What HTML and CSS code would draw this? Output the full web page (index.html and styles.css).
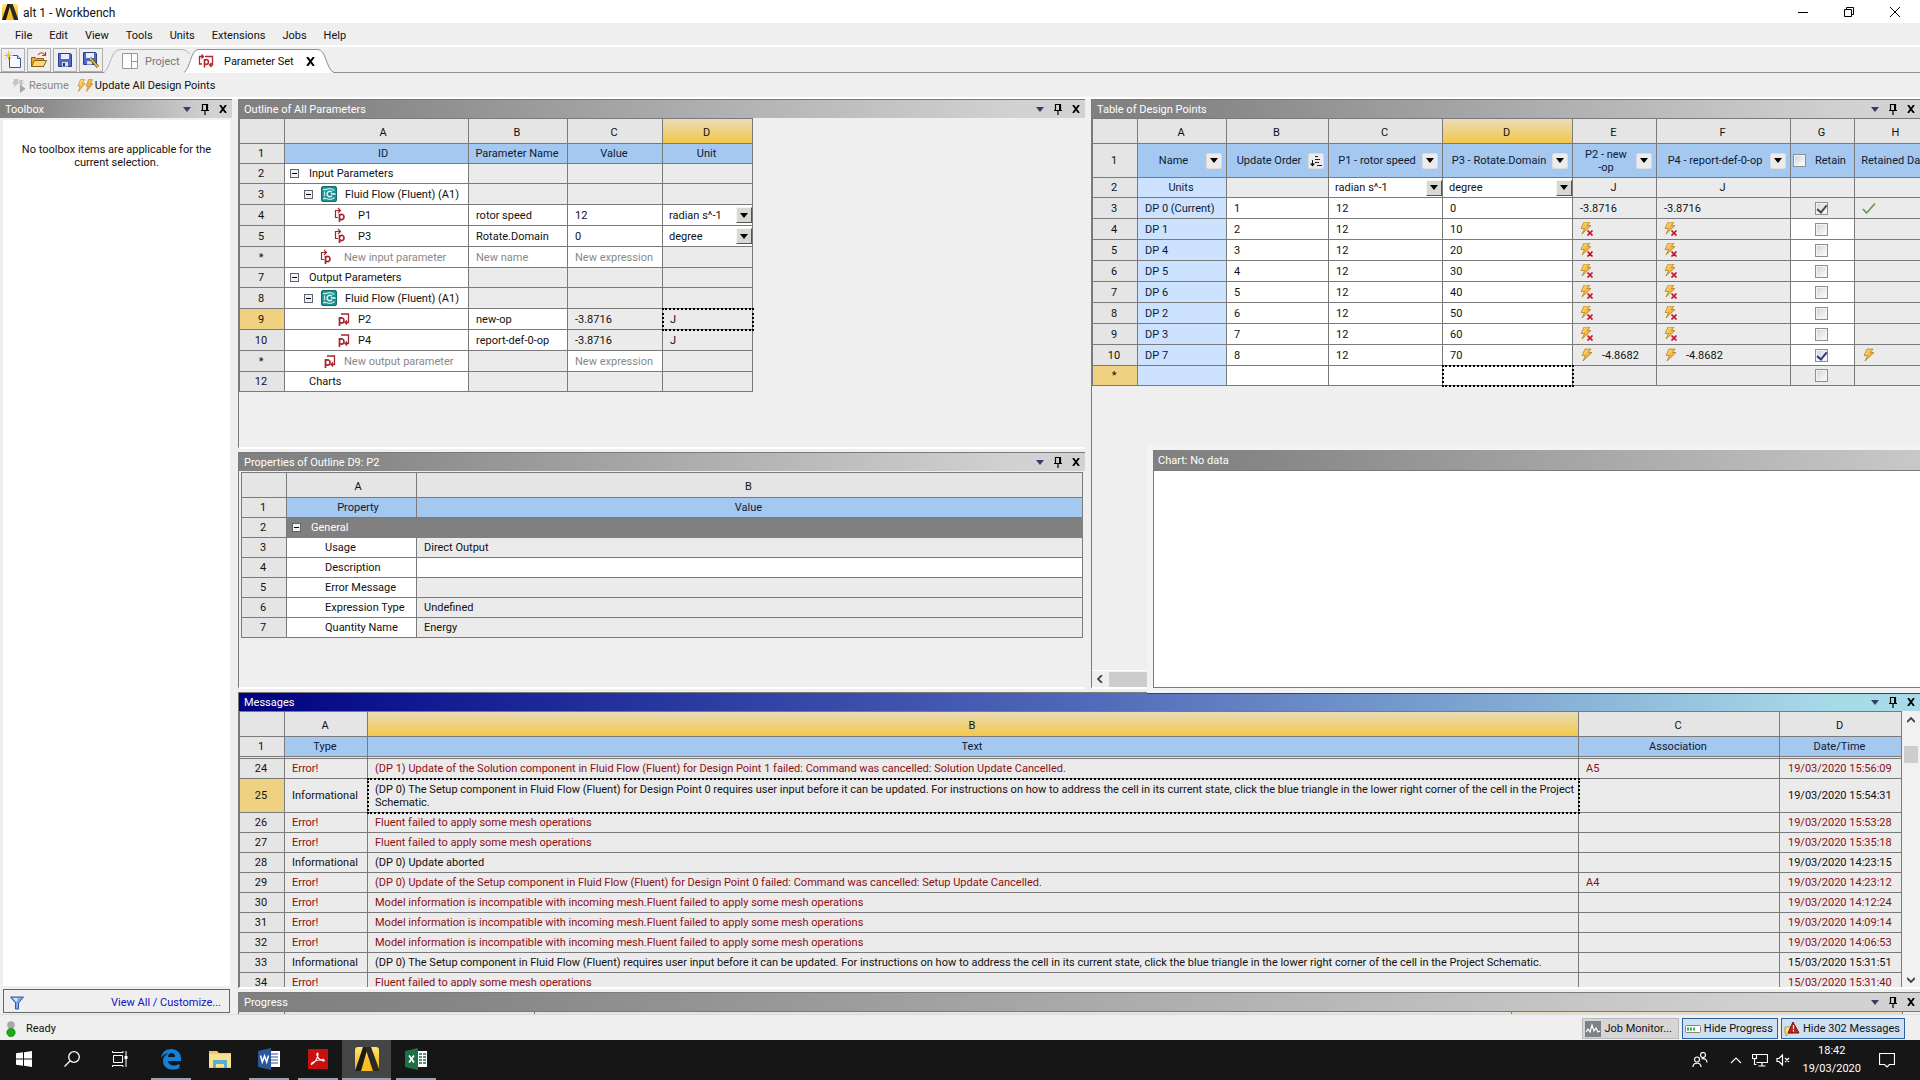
FILE: index.html
```html
<!DOCTYPE html>
<html lang="en">
<head>
<meta charset="utf-8">
<title>alt 1 - Workbench</title>
<link rel="stylesheet" href="styles.css">
</head>
<body>
<svg class="defs" aria-hidden="true">
  <defs>
    <linearGradient id="gold" x1="0" y1="0" x2="0" y2="1"><stop offset="0" stop-color="#ffe773"/><stop offset="1" stop-color="#f5a80c"/></linearGradient>
    <linearGradient id="boltfill" x1="0" y1="0" x2="1" y2="1"><stop offset="0" stop-color="#ffe680"/><stop offset="1" stop-color="#e08a10"/></linearGradient>
  </defs>
  <symbol id="ansys" viewBox="0 0 24 24"><rect width="24" height="24" rx="3" fill="url(#gold)"/><path d="M8 0h5L6 24H0z" fill="#1b1a17"/><path d="M10 0h6l8 22v2h-6z" fill="#2b2924"/><path d="M11.500 9l-5 15h10z" fill="#f9bf22"/></symbol>
  <symbol id="drop" viewBox="0 0 8 5"><path d="M0 0h8L4 5z" fill="currentColor"/></symbol>
  <symbol id="pin" viewBox="0 0 10 12"><path d="M2.500 7V1.500h5V7M1 7.500h8M5 8v4" fill="none" stroke="#000" stroke-width="1.200"/><path d="M6 1h2v6H6z"/></symbol>
  <symbol id="close" viewBox="0 0 8 8"><path d="M1 0l6 8M7 0L1 8" stroke="#000" stroke-width="1.800"/></symbol>
  <symbol id="minus" viewBox="0 0 9 9"><rect x=".5" y=".5" width="8" height="8" fill="#f2f2f2" stroke="#5c6570"/><path d="M2 4.500h5" stroke="#000"/></symbol>
  <symbol id="bolt" viewBox="0 0 14 14"><path d="M5 1h6L8.500 4.500H12L3 13l2.500-5.500H2z" fill="url(#boltfill)" stroke="#b5750f" stroke-width=".7"/></symbol>
  <symbol id="boltx" viewBox="0 0 14 14"><path d="M4 0h6L7.500 3.500H11L2 12l2.500-5.500H1z" fill="url(#boltfill)" stroke="#b5750f" stroke-width=".7"/><path d="M7.500 8.500l5 5M12.500 8.500l-5 5" stroke="#c8102a" stroke-width="1.700"/></symbol>
  <symbol id="pin-param" viewBox="0 0 18 16"><path d="M6 10.500H3.500V3.500H8M6 1l2.500 2.500L6 6" fill="none" stroke="#a8242c" stroke-width="1.200"/><path d="M7.500 15V7M7.500 8.500c2-2 4.500-1 4.500 1.500s-2.500 3.500-4.500 1.500" fill="none" stroke="#a8242c" stroke-width="1.700"/></symbol>
  <symbol id="pout-param" viewBox="0 0 18 16"><path d="M7.500 15V6M7.500 8c2-2 4.500-1 4.500 1.500s-2.500 3.500-4.500 1.500" fill="none" stroke="#a8242c" stroke-width="1.700"/><path d="M9 3h7.500v8.500H13M15 9.500l-2 2 2 2" fill="none" stroke="#a8242c" stroke-width="1.300"/></symbol>
  <symbol id="fluent" viewBox="0 0 16 16"><rect x=".5" y=".5" width="15" height="15" rx="1.500" fill="#1a9090" stroke="#0d6f70"/><path d="M2 3.500h3.500C8 2 11 2.500 13.500 4.500M2 12.500h3.500C8 14 11 13.500 13.500 11.500M3.500 5.500v5" fill="none" stroke="#bfe9e6" stroke-width="1.300"/><path d="M11 6.200C9 4.500 6 5.500 6 8s3 3.500 5 1.800M10 8h4.500" fill="none" stroke="#e6fbf9" stroke-width="1.500"/></symbol>
</svg>

<header class="titlebar">
  <svg class="app-icon"><use href="#ansys"/></svg>
  <h1>alt 1 - Workbench</h1>
  <div class="window-buttons">
    <button aria-label="Minimize"><svg viewBox="0 0 10 10"><path d="M0 5.500h10" stroke="#000"/></svg></button>
    <button aria-label="Restore"><svg viewBox="0 0 10 10"><path d="M.5 2.500h7v7h-7zM2.500 2.500v-2h7v7h-2" fill="none" stroke="#000"/></svg></button>
    <button aria-label="Close"><svg viewBox="0 0 10 10"><path d="M0 0l10 10M10 0L0 10" stroke="#000"/></svg></button>
  </div>
</header>

<nav class="menubar">
  <button>File</button><button>Edit</button><button>View</button><button>Tools</button><button>Units</button><button>Extensions</button><button>Jobs</button><button>Help</button>
</nav>

<div class="tabbar">
  <div class="file-tools">
    <button aria-label="New"><svg viewBox="0 0 18 18"><path d="M5.500 4.500h8l3 3v9h-11z" fill="#f4f8ff" stroke="#3b5a96"/><path d="M13.500 4.500v3h3" fill="#cfdcf5" stroke="#3b5a96"/><path d="M4.500 0v9M0 4.500h9M1.500 1.500l6 6M7.500 1.500l-6 6" stroke="#e8bd2e"/></svg></button>
    <button aria-label="Open"><svg viewBox="0 0 18 18"><path d="M1.500 15.500v-9h4l1 1h7v8z" fill="#e8a92f" stroke="#8d6114"/><path d="M1.500 15.500l3-6h12l-3 6z" fill="#ffd873" stroke="#8d6114"/><path d="M8 4c2-3 5-3 7 0M15.500 1v3.500H12" fill="none" stroke="#c33b2b" stroke-width="1.200"/></svg></button>
    <button aria-label="Save"><svg viewBox="0 0 18 18"><path d="M2.500 2.500h12l1 1v12h-13z" fill="#4f69c4" stroke="#2c3f8c"/><path d="M5 3h8v5H5z" fill="#e7eefb"/><path d="M6 11h6v4.500H6z" fill="#d5dcea"/><path d="M7 12h2v3H7z" fill="#22347c"/></svg></button>
    <button aria-label="Save As"><svg viewBox="0 0 18 18"><path d="M1.500 1.500h12l1 1v11h-13z" fill="#4f69c4" stroke="#2c3f8c"/><path d="M4 2h8v5H4z" fill="#e7eefb"/><path d="M5 10h5v3.500H5z" fill="#d5dcea"/><path d="M8 7l8 9" stroke="#6b4b12" stroke-width="3"/><path d="M8 7l8 9" stroke="#f0c64a" stroke-width="1.500"/></svg></button>
  </div>
  <div class="tabs" role="tablist">
    <button class="tab project" role="tab">
      <svg class="shape" viewBox="0 0 86 24" preserveAspectRatio="none"><path d="M0 23.500C6 20 7 .5 16 .5H78L86 6V24H0z" fill="#efefef"/><path d="M0 23.500C6 20 7 .5 16 .5H78Q83 1 86 5" fill="none" stroke="#b5b5b5"/></svg>
      <span class="tab-body"><svg class="tab-icon" viewBox="0 0 16 16"><path d="M.5.500h15v15H.5zM9.500.5v15M9.500 8.500h6" fill="#fdfdfd" stroke="#9a9a92"/></svg>Project</span>
    </button>
    <button class="tab active" role="tab" aria-selected="true">
      <svg class="shape" viewBox="0 0 150 24" preserveAspectRatio="none"><path d="M0 24C6 20 7 .5 14 .5H134C142 .5 142 20 150 24z" fill="#fff"/><path d="M0 23.500C6 20 7 .5 14 .5H134C142 .5 142 20 150 23.500" fill="none" stroke="#8f8f8f"/></svg>
      <span class="tab-body"><svg class="tab-icon" viewBox="0 0 16 16"><path d="M4 11H1.500V3.500H5M3.500 1.500l2 2-2 2M7 3.500h7.500V12H12M13.500 10l-2 2 2 2" fill="none" stroke="#b3262e" stroke-width="1.300"/><path d="M6.500 14.500V6M6.500 7.500c1.500-1.500 4-1 4 1.500s-2.500 3-4 1.500" fill="none" stroke="#b3262e" stroke-width="1.600"/></svg>Parameter Set<svg class="tab-close"><use href="#close"/></svg></span>
    </button>
  </div>
</div>

<div class="actionbar">
  <button class="disabled" disabled><svg class="wide" viewBox="0 0 16 16"><path d="M3 1h5L6 4h3L2 11l2-4H1zM8 2h5l-2 3h3L9 9" fill="#c4c4c4"/><path d="M9 7l6 4.500L9 16z" fill="#a5a5a5"/></svg>Resume</button>
  <button><svg class="wide" viewBox="0 0 16 14"><path d="M3.500 1h4L5.500 5H8L1.500 13 3 7.500H1zM11.500 1h4l-2 4H16l-6.500 8L11 7.500H9z" fill="url(#boltfill)" stroke="#b5750f" stroke-width=".5"/></svg>Update All Design Points</button>
</div>

<main class="workspace">
  <aside class="panel toolbox">
    <div class="panel-title"><h2>Toolbox</h2><div class="panel-buttons"><button aria-label="Menu"><svg class="i-drop"><use href="#drop"/></svg></button><button aria-label="Pin"><svg class="i-pin"><use href="#pin"/></svg></button><button aria-label="Close"><svg class="i-close"><use href="#close"/></svg></button></div></div>
    <div class="toolbox-body"><p>No toolbox items are applicable for the current selection.</p></div>
    <div class="toolbox-foot">
      <svg viewBox="0 0 14 14"><path d="M.5 1h13L8.500 7v6h-3V7z" fill="#7ea8e8" stroke="#2c5aa8"/><path d="M3 2h5L6.500 6z" fill="#d7e6ff"/></svg>
      <a href="#">View All / Customize...</a>
    </div>
  </aside>

  <div class="docks">
    <div class="upper">
      <div class="left-stack">
        <section class="panel">
          <div class="panel-title"><h2>Outline of All Parameters</h2><div class="panel-buttons"><button aria-label="Menu"><svg class="i-drop"><use href="#drop"/></svg></button><button aria-label="Pin"><svg class="i-pin"><use href="#pin"/></svg></button><button aria-label="Close"><svg class="i-close"><use href="#close"/></svg></button></div></div>
          <table class="sheet outline">
            <colgroup><col class="c-row"><col class="o-id"><col class="o-name"><col class="o-value"><col class="o-unit"></colgroup>
            <tr class="letters"><th></th><th>A</th><th>B</th><th>C</th><th class="picked">D</th></tr>
            <tr class="heads"><th>1</th><th>ID</th><th>Parameter Name</th><th>Value</th><th>Unit</th></tr>
            <tr class="short"><th>2</th><td><div class="tree l1"><svg class="i-minus"><use href="#minus"/></svg>Input Parameters</div></td><td class="ro"></td><td class="ro"></td><td class="ro"></td></tr>
            <tr><th>3</th><td><div class="tree l2"><svg class="i-minus"><use href="#minus"/></svg><svg class="i-sys"><use href="#fluent"/></svg>Fluid Flow (Fluent) (A1)</div></td><td class="ro"></td><td class="ro"></td><td class="ro"></td></tr>
            <tr><th>4</th><td><div class="tree l4"><svg class="i-param"><use href="#pin-param"/></svg>P1</div></td><td>rotor speed</td><td>12</td><td class="has-combo"><span class="combo"><select aria-label="Unit of P1"><option>radian s^-1</option></select><span class="arrow"><svg class="i-drop"><use href="#drop"/></svg></span></span></td></tr>
            <tr><th>5</th><td><div class="tree l4"><svg class="i-param"><use href="#pin-param"/></svg>P3</div></td><td>Rotate.Domain</td><td>0</td><td class="has-combo"><span class="combo"><select aria-label="Unit of P3"><option>degree</option></select><span class="arrow"><svg class="i-drop"><use href="#drop"/></svg></span></span></td></tr>
            <tr class="new"><th>*</th><td><div class="tree l3"><svg class="i-param"><use href="#pin-param"/></svg>New input parameter</div></td><td>New name</td><td>New expression</td><td class="ro"></td></tr>
            <tr class="short"><th>7</th><td><div class="tree l1"><svg class="i-minus"><use href="#minus"/></svg>Output Parameters</div></td><td class="ro"></td><td class="ro"></td><td class="ro"></td></tr>
            <tr><th>8</th><td><div class="tree l2"><svg class="i-minus"><use href="#minus"/></svg><svg class="i-sys"><use href="#fluent"/></svg>Fluid Flow (Fluent) (A1)</div></td><td class="ro"></td><td class="ro"></td><td class="ro"></td></tr>
            <tr><th class="picked-row">9</th><td><div class="tree l4"><svg class="i-param"><use href="#pout-param"/></svg>P2</div></td><td>new-op</td><td class="ro">-3.8716</td><td class="ro cursor">J</td></tr>
            <tr><th>10</th><td><div class="tree l4"><svg class="i-param"><use href="#pout-param"/></svg>P4</div></td><td>report-def-0-op</td><td class="ro">-3.8716</td><td class="ro">J</td></tr>
            <tr class="new"><th>*</th><td><div class="tree l3"><svg class="i-param"><use href="#pout-param"/></svg>New output parameter</div></td><td class="ro"></td><td>New expression</td><td class="ro"></td></tr>
            <tr class="short"><th>12</th><td><div class="tree l1 leaf">Charts</div></td><td class="ro"></td><td class="ro"></td><td class="ro"></td></tr>
          </table>
        </section>

        <section class="panel">
          <div class="panel-title"><h2>Properties of Outline D9: P2</h2><div class="panel-buttons"><button aria-label="Menu"><svg class="i-drop"><use href="#drop"/></svg></button><button aria-label="Pin"><svg class="i-pin"><use href="#pin"/></svg></button><button aria-label="Close"><svg class="i-close"><use href="#close"/></svg></button></div></div>
          <div class="props-wrap">
          <table class="sheet props">
            <colgroup><col class="c-row"><col class="p-name"><col></colgroup>
            <tr class="letters"><th></th><th>A</th><th>B</th></tr>
            <tr class="heads"><th>1</th><th>Property</th><th>Value</th></tr>
            <tr class="group short"><th>2</th><td colspan="2"><div class="tree l1"><svg class="i-minus"><use href="#minus"/></svg>General</div></td></tr>
            <tr class="short"><th>3</th><td>Usage</td><td class="ro">Direct Output</td></tr>
            <tr class="short"><th>4</th><td>Description</td><td></td></tr>
            <tr class="short"><th>5</th><td>Error Message</td><td class="ro"></td></tr>
            <tr class="short"><th>6</th><td>Expression Type</td><td class="ro">Undefined</td></tr>
            <tr class="short"><th>7</th><td>Quantity Name</td><td class="ro">Energy</td></tr>
          </table>
          </div>
        </section>
      </div>

      <div class="design-area">
        <section class="panel">
          <div class="panel-title"><h2>Table of Design Points</h2><div class="panel-buttons"><button aria-label="Menu"><svg class="i-drop"><use href="#drop"/></svg></button><button aria-label="Pin"><svg class="i-pin"><use href="#pin"/></svg></button><button aria-label="Close"><svg class="i-close"><use href="#close"/></svg></button></div></div>
          <div class="grid-view">
          <table class="sheet design">
            <colgroup><col class="c-row"><col class="d-a"><col class="d-b"><col class="d-c"><col class="d-d"><col class="d-e"><col class="d-f"><col class="d-g"><col class="d-h"></colgroup>
            <tr class="letters"><th></th><th>A</th><th>B</th><th>C</th><th class="picked">D</th><th>E</th><th>F</th><th>G</th><th>H</th></tr>
            <tr class="heads tall"><th>1</th>
              <th><div class="head"><span>Name</span><button class="filter" aria-label="Filter Name"><svg class="i-drop"><use href="#drop"/></svg></button></div></th>
              <th><div class="head"><span>Update Order</span><button class="filter" aria-label="Sort Update Order"><svg class="i-sort" viewBox="0 0 12 12"><path d="M5 1.500h3M5 4.500h5M5 7.500h4M7 10.500h5M2.500 5v5" stroke="#222"/><path d="M0 8.500h5l-2.500 3z"/></svg></button></div></th>
              <th><div class="head"><span>P1 - rotor speed</span><button class="filter" aria-label="Filter P1"><svg class="i-drop"><use href="#drop"/></svg></button></div></th>
              <th><div class="head"><span>P3 - Rotate.Domain</span><button class="filter" aria-label="Filter P3"><svg class="i-drop"><use href="#drop"/></svg></button></div></th>
              <th><div class="head"><span>P2 - new<br>-op</span><button class="filter" aria-label="Filter P2"><svg class="i-drop"><use href="#drop"/></svg></button></div></th>
              <th><div class="head"><span>P4 - report-def-0-op</span><button class="filter" aria-label="Filter P4"><svg class="i-drop"><use href="#drop"/></svg></button></div></th>
              <th><label class="retain"><input type="checkbox">Retain</label></th>
              <th class="nowrap">Retained Data</th></tr>
            <tr class="short units"><th>2</th><td class="name">Units</td><td class="ro"></td><td class="has-combo"><span class="combo"><select aria-label="Unit of P1"><option>radian s^-1</option></select><span class="arrow"><svg class="i-drop"><use href="#drop"/></svg></span></span></td><td class="has-combo"><span class="combo"><select aria-label="Unit of P3"><option>degree</option></select><span class="arrow"><svg class="i-drop"><use href="#drop"/></svg></span></span></td><td class="ro">J</td><td class="ro">J</td><td class="ro"></td><td class="ro"></td></tr>
            <tr><th>3</th><td class="name">DP 0 (Current)</td><td>1</td><td>12</td><td>0</td><td class="ro">-3.8716</td><td class="ro">-3.8716</td><td class="ro tick"><input type="checkbox" class="grey" aria-label="Retain DP 0" checked></td><td class="ro"><svg class="i-bolt" viewBox="0 0 14 14"><path d="M1 8l3.500 4L13 2.500" fill="none" stroke="#6f9a4a" stroke-width="1.800"/></svg></td></tr>
            <tr><th>4</th><td class="name">DP 1</td><td>2</td><td>12</td><td>10</td><td class="ro"><svg class="i-bolt"><use href="#boltx"/></svg></td><td class="ro"><svg class="i-bolt"><use href="#boltx"/></svg></td><td class="tick"><input type="checkbox" aria-label="Retain DP 1"></td><td class="ro"></td></tr>
            <tr><th>5</th><td class="name">DP 4</td><td>3</td><td>12</td><td>20</td><td class="ro"><svg class="i-bolt"><use href="#boltx"/></svg></td><td class="ro"><svg class="i-bolt"><use href="#boltx"/></svg></td><td class="tick"><input type="checkbox" aria-label="Retain DP 4"></td><td class="ro"></td></tr>
            <tr><th>6</th><td class="name">DP 5</td><td>4</td><td>12</td><td>30</td><td class="ro"><svg class="i-bolt"><use href="#boltx"/></svg></td><td class="ro"><svg class="i-bolt"><use href="#boltx"/></svg></td><td class="tick"><input type="checkbox" aria-label="Retain DP 5"></td><td class="ro"></td></tr>
            <tr><th>7</th><td class="name">DP 6</td><td>5</td><td>12</td><td>40</td><td class="ro"><svg class="i-bolt"><use href="#boltx"/></svg></td><td class="ro"><svg class="i-bolt"><use href="#boltx"/></svg></td><td class="tick"><input type="checkbox" aria-label="Retain DP 6"></td><td class="ro"></td></tr>
            <tr><th>8</th><td class="name">DP 2</td><td>6</td><td>12</td><td>50</td><td class="ro"><svg class="i-bolt"><use href="#boltx"/></svg></td><td class="ro"><svg class="i-bolt"><use href="#boltx"/></svg></td><td class="tick"><input type="checkbox" aria-label="Retain DP 2"></td><td class="ro"></td></tr>
            <tr><th>9</th><td class="name">DP 3</td><td>7</td><td>12</td><td>60</td><td class="ro"><svg class="i-bolt"><use href="#boltx"/></svg></td><td class="ro"><svg class="i-bolt"><use href="#boltx"/></svg></td><td class="tick"><input type="checkbox" aria-label="Retain DP 3"></td><td class="ro"></td></tr>
            <tr><th>10</th><td class="name">DP 7</td><td>8</td><td>12</td><td>70</td><td class="ro"><svg class="i-bolt"><use href="#bolt"/></svg><span class="val">-4.8682</span></td><td class="ro"><svg class="i-bolt"><use href="#bolt"/></svg><span class="val">-4.8682</span></td><td class="tick"><input type="checkbox" aria-label="Retain DP 7" checked></td><td class="ro"><svg class="i-bolt"><use href="#bolt"/></svg></td></tr>
            <tr class="short"><th class="picked-row">*</th><td class="name"></td><td></td><td></td><td class="cursor"></td><td class="ro"></td><td class="ro"></td><td class="ro tick"><input type="checkbox" aria-label="Retain new design point"></td><td class="ro"></td></tr>
          </table>
          </div>
          <div class="hscroll"><svg viewBox="0 0 6 8"><path d="M5 0L1 4l4 4" fill="none" stroke="#444" stroke-width="1.800"/></svg><span class="thumb"></span></div>
        </section>
        <section class="chart-window"><h2>Chart: No data</h2><div class="canvas"></div></section>
      </div>
    </div>

    <section class="panel messages">
      <div class="panel-title focused"><h2>Messages</h2><div class="panel-buttons"><button aria-label="Menu"><svg class="i-drop"><use href="#drop"/></svg></button><button aria-label="Pin"><svg class="i-pin"><use href="#pin"/></svg></button><button aria-label="Close"><svg class="i-close"><use href="#close"/></svg></button></div></div>
      <div class="log">
        <div class="log-view">
        <table class="sheet">
          <colgroup><col class="c-row"><col class="m-type"><col><col class="m-assoc"><col class="m-date"></colgroup>
          <tr class="letters"><th></th><th>A</th><th class="picked">B</th><th>C</th><th>D</th></tr>
          <tr class="heads"><th>1</th><th>Type</th><th>Text</th><th>Association</th><th>Date/Time</th></tr>
          <tr class="split"><th></th><td></td><td></td><td></td><td></td></tr>
          <tr class="error"><th>24</th><td>Error!</td><td>(DP 1) Update of the Solution component in Fluid Flow (Fluent) for Design Point 1 failed: Command was cancelled: Solution Update Cancelled.</td><td>A5</td><td>19/03/2020 15:56:09</td></tr>
          <tr class="tall"><th class="picked-row">25</th><td>Informational</td><td class="cursor">(DP 0) The Setup component in Fluid Flow (Fluent) for Design Point 0 requires user input before it can be updated. For instructions on how to address the cell in its current state, click the blue triangle in the lower right corner of the cell in the Project<br>Schematic.</td><td></td><td>19/03/2020 15:54:31</td></tr>
          <tr class="error"><th>26</th><td>Error!</td><td>Fluent failed to apply some mesh operations</td><td></td><td>19/03/2020 15:53:28</td></tr>
          <tr class="error"><th>27</th><td>Error!</td><td>Fluent failed to apply some mesh operations</td><td></td><td>19/03/2020 15:35:18</td></tr>
          <tr><th>28</th><td>Informational</td><td>(DP 0) Update aborted</td><td></td><td>19/03/2020 14:23:15</td></tr>
          <tr class="error"><th>29</th><td>Error!</td><td>(DP 0) Update of the Setup component in Fluid Flow (Fluent) for Design Point 0 failed: Command was cancelled: Setup Update Cancelled.</td><td>A4</td><td>19/03/2020 14:23:12</td></tr>
          <tr class="error"><th>30</th><td>Error!</td><td>Model information is incompatible with incoming mesh.Fluent failed to apply some mesh operations</td><td></td><td>19/03/2020 14:12:24</td></tr>
          <tr class="error"><th>31</th><td>Error!</td><td>Model information is incompatible with incoming mesh.Fluent failed to apply some mesh operations</td><td></td><td>19/03/2020 14:09:14</td></tr>
          <tr class="error"><th>32</th><td>Error!</td><td>Model information is incompatible with incoming mesh.Fluent failed to apply some mesh operations</td><td></td><td>19/03/2020 14:06:53</td></tr>
          <tr><th>33</th><td>Informational</td><td>(DP 0) The Setup component in Fluid Flow (Fluent) requires user input before it can be updated. For instructions on how to address the cell in its current state, click the blue triangle in the lower right corner of the cell in the Project Schematic.</td><td></td><td>15/03/2020 15:31:51</td></tr>
          <tr class="error"><th>34</th><td>Error!</td><td>Fluent failed to apply some mesh operations</td><td></td><td>15/03/2020 15:31:40</td></tr>
        </table>
        </div>
        <div class="vscroll"><svg viewBox="0 0 8 6"><path d="M0 5l4-4 4 4" fill="none" stroke="#444" stroke-width="1.800"/></svg><span class="thumb"></span><svg class="down" viewBox="0 0 8 6"><path d="M0 1l4 4 4-4" fill="none" stroke="#444" stroke-width="1.800"/></svg></div>
      </div>
    </section>

    <section class="panel progress">
      <div class="panel-title"><h2>Progress</h2><div class="panel-buttons"><button aria-label="Menu"><svg class="i-drop"><use href="#drop"/></svg></button><button aria-label="Pin"><svg class="i-pin"><use href="#pin"/></svg></button><button aria-label="Close"><svg class="i-close"><use href="#close"/></svg></button></div></div>
      <div class="progress-cols"><span></span><span></span><span></span><span class="gold"></span><span class="end"></span></div>
    </section>
  </div>
</main>

<footer class="statusbar">
  <svg class="lamp" viewBox="0 0 10 16"><circle cx="5" cy="4" r="3.800" fill="#a9a9a9"/><circle cx="5" cy="11.500" r="4.200" fill="#17ab17" stroke="#0b7a0b" stroke-width=".6"/></svg>
  <span class="ready">Ready</span>
  <div class="status-buttons">
    <button class="plain"><svg viewBox="0 0 16 16"><rect width="16" height="16" fill="#7c8288"/><path d="M1 11l2-3 2 3 2-7 2 6 2-3 2 4 2-1" fill="none" stroke="#fff" stroke-width="1.200"/></svg>Job Monitor...</button>
    <button><svg viewBox="0 0 16 16"><rect x=".5" y="4.500" width="15" height="7" rx="1" fill="#fff" stroke="#7d8a7d"/><path d="M2 6.500h2v3H2zM5 6.500h2v3H5zM8 6.500h2v3H8z" fill="#38b838"/></svg>Hide Progress</button>
    <button><svg viewBox="0 0 16 16"><path d="M1 6h8v6H5l-3 3v-3H1z" fill="#ffe08a" stroke="#c9912a"/><path d="M9 1l6 11H4z" fill="#b9261d" stroke="#7c130d"/><path d="M9.500 4v4M9.500 9v1.500" stroke="#fff" stroke-width="1.200"/></svg>Hide 302 Messages</button>
  </div>
</footer>

<footer class="taskbar">
  <div class="apps">
    <button class="system" aria-label="Start"><svg class="t16" viewBox="0 0 16 16"><path d="M0 2.300L7 1.300V7.500H0zM8 1.200L16 0v7.500H8zM0 8.500h7v6.200l-7-1zM8 8.500h8V16l-8-1.200z" fill="#fff"/></svg></button>
    <button class="system" aria-label="Search"><svg class="t16" viewBox="0 0 16 16"><circle cx="10" cy="6" r="5.300" fill="none" stroke="#fff" stroke-width="1.300"/><path d="M6 10L.5 15.500" stroke="#fff" stroke-width="1.300"/></svg></button>
    <button class="system" aria-label="Task View"><svg class="t16" viewBox="0 0 16 16"><path d="M1.500 4.500h9v7h-9zM.5 0v1.500h10.500V0M.5 16v-1.500h10.500V16M14 0v16" fill="none" stroke="#fff"/><path d="M12.500 5h3v3h-3z" fill="#fff"/></svg></button>
    <button class="open edge" aria-label="Edge"><svg class="t22" viewBox="0 0 22 22"><path d="M1 10C2 4 6 1 11 1c6 0 10 4 10 9v3H8c.2 3 3 4.500 6 4.500 2 0 4-.6 5.500-1.500v4c-2 1.200-4 1.600-6.500 1.600C7 21.600 3 18 3 13c0-4 2.500-6.500 6-7.500C5 5.500 2.500 7.500 1 10zm7-1h7c0-2.500-1.200-4-3.500-4S8.300 6.700 8 9z" fill="#1480d8"/></svg></button>
    <button aria-label="File Explorer"><svg class="t22" viewBox="0 0 22 20"><path d="M0 2h8l2 2h12v15H0z" fill="#f0c75e"/><path d="M0 5h22v13H0z" fill="#fbe08f"/><path d="M4 19v-7q0-1 1-1h12q1 0 1 1v7h-3v-4H7v4z" fill="#4fb3d3"/></svg></button>
    <button class="open" aria-label="Word"><svg class="t22" viewBox="0 0 22 22"><path d="M11 3h11v16H11z" fill="#fff"/><path d="M13 6h7M13 9h7M13 12h7M13 15h7" stroke="#2b579a"/><path d="M0 3l13-3v22L0 19z" fill="#2b579a"/><path d="M2.500 7.500L4.300 14l2.200-6 2.200 6 1.800-6.500" fill="none" stroke="#fff" stroke-width="1.500"/></svg></button>
    <button class="open" aria-label="Acrobat Reader"><svg class="t22" viewBox="0 0 22 22"><path d="M1 1h20v20H1z" fill="#c8110e"/><path d="M5 16c2-1 6-5 6-10 0-1.500-1.500-1-1 1 .7 3 3.500 6 6.500 6 1.500-.2.500-1.800-1.500-1.500-3 .3-6 1-8.500 2.500S4 17 5 16z" fill="none" stroke="#fff" stroke-width="1.200"/></svg></button>
    <button class="current" aria-label="Workbench"><svg class="t24"><use href="#ansys"/></svg></button>
    <button class="open" aria-label="Excel"><svg class="t22" viewBox="0 0 22 22"><path d="M11 3h11v16H11z" fill="#fff"/><path d="M14 6h3M18 6h3M14 9h3M18 9h3M14 12h3M18 12h3M14 15h3M18 15h3" stroke="#1d7044" stroke-width="1.500"/><path d="M0 3l13-3v22L0 19z" fill="#1d7044"/><path d="M4 7.500l5 7M9 7.500l-5 7" stroke="#fff" stroke-width="1.700"/></svg></button>
  </div>
  <div class="tray">
    <svg class="people" viewBox="0 0 16 16"><circle cx="5" cy="7.500" r="2.500"/><path d="M1 15c0-5 8-5 8 0"/><circle cx="11" cy="3" r="2.500"/><path d="M9.500 7c3-1 5.500.5 5.500 3.500"/></svg>
    <svg class="chev" viewBox="0 0 12 12"><path d="M1 9l5-5 5 5"/></svg>
    <svg class="net" viewBox="0 0 16 14"><path d="M4.500 1.500h11v8h-11M.5 1.500h4v4h-4zM2.500 5.500v6h2M10 9.500v3M6.500 13h7"/></svg>
    <svg class="vol" viewBox="0 0 14 12"><path d="M1 4.500h2l3.500-3.500v10L3 7.500H1zM9 4l4 4M13 4L9 8"/></svg>
    <time class="clock"><span>18:42</span><span>19/03/2020</span></time>
    <svg class="note" viewBox="0 0 16 16"><path d="M.5 1.500h15v11h-5L8 15l-2.500-2.500h-5z"/></svg>
  </div>
</footer>
</body>
</html>
```
FILE: styles.css
```css
:root {
  --line: #7a7a7a;
  --face: #efefef;
  --cell: #ebebeb;
  --head: #e5e5e5;
  --blue: #a5c8f0;
  --pale: #cce2ff;
  --gold: #efd281;
  --gold-fade: linear-gradient(#e9dcb8, #f3c84a);
}

* { box-sizing: border-box; }

body {
  margin: 0;
  height: 100vh;
  display: flex;
  flex-direction: column;
  overflow: hidden;
  background: var(--face);
  color: #111;
  font: 11px/13px Roboto, "Noto Sans", sans-serif;
}

h1, h2, p { margin: 0; font-size: 11px; font-weight: 400; }
button, select, input { margin: 0; padding: 0; border: 0; background: none; color: inherit; font: inherit; }
svg { display: block; flex: none; }
.defs { width: 0; height: 0; position: absolute; }

/* Icon sizes */
.i-drop { width: 8px; height: 5px; }
.i-pin { width: 10px; height: 12px; }
.i-close { width: 8px; height: 8px; }
.i-minus { width: 9px; height: 9px; }
.i-sys { width: 16px; height: 16px; }
.i-param { width: 18px; height: 16px; }
.i-sort { width: 12px; height: 12px; }
.i-bolt { width: 14px; height: 14px; display: inline-block; vertical-align: middle; }

/* Title bar */
.titlebar { display: flex; align-items: center; height: 23px; padding-left: 2px; background: #fff; }
.titlebar h1 { font-size: 12px; line-height: 16px; margin-left: 5px; padding-top: 2px; flex: 1; }
.app-icon { width: 16px; height: 16px; }
.window-buttons { display: flex; padding-right: 2px; }
.window-buttons button { width: 46px; height: 20px; display: grid; place-items: center; }
.window-buttons svg { width: 10px; height: 10px; }

/* Menus and toolbars */
.menubar { display: flex; gap: 17px; height: 24px; padding: 2px 0 0 15px; border-bottom: 2px solid #fff; }
.tabbar { display: flex; height: 26px; border-bottom: 1px solid #8f8f8f; }
.file-tools { display: flex; gap: 2px; padding: 1px 0 0 1px; }
.file-tools button { width: 24px; height: 24px; border: 1px solid #b0b0b0; display: grid; place-items: center; }
.file-tools svg { width: 18px; height: 18px; }
.tabs { display: flex; margin: 2px 0 -1px 1px; }
.tab { display: grid; height: 24px; }
.tab > * { grid-area: 1 / 1; }
.tab.project { width: 86px; color: #777; }
.tab.active { width: 150px; margin-left: -6px; }
.shape { width: 100%; height: 24px; }
.tab-body { display: flex; align-items: center; gap: 7px; padding-left: 18px; }
.active .tab-body { padding-left: 14px; gap: 10px; }
.tab-icon { width: 16px; height: 16px; }
.tab-close { width: 9px; height: 9px; margin-left: 2px; }
.actionbar { display: flex; gap: 8px; height: 26px; padding: 0 0 0 11px; border-bottom: 2px solid #fff; }
.actionbar button { display: flex; align-items: center; gap: 2px; }
.actionbar .disabled { color: #888; }
.wide { width: 16px; height: 15px; }

/* Docked panels */
.workspace { flex: 1; min-height: 0; display: grid; grid-template-columns: 232px minmax(0, 1fr); gap: 6px; }
.docks { min-height: 0; display: grid; grid-template-rows: minmax(0, 590fr) minmax(0, 297fr) 22px; gap: 3px; }
.upper { display: grid; grid-template-columns: minmax(0, 847fr) minmax(0, 829fr); gap: 6px; min-height: 0; }
.left-stack { display: grid; grid-template-rows: minmax(0, 350fr) minmax(0, 237fr); gap: 3px; min-height: 0; }
.panel { display: flex; flex-direction: column; min-height: 0; overflow: hidden; border: solid var(--line); border-width: 1px 0 0 1px; border-bottom: 2px solid #fff; }
.panel-title { display: flex; flex: none; align-items: center; height: 18px; padding: 0 0 0 5px; background: linear-gradient(90deg, #808080, #858585 12%, #d2d2d2 92%); color: #fff; }
.panel-title h2 { flex: 1; }
.panel-title.focused { background: linear-gradient(90deg, #00007c, #101890 10%, #5068b8 50%, #a8dbe8 95%); }
.panel-buttons { display: flex; color: #333d66; }
.panel-buttons button { width: 18px; height: 18px; display: grid; place-items: center; }

.toolbox { border-left: 0; border-bottom: 0; }
.toolbox-body { flex: 1; margin: 2px 2px 0 3px; padding: 23px 16px; background: #fff; text-align: center; }
.toolbox-foot { display: flex; align-items: center; justify-content: space-between; height: 24px; margin: 3px 2px 1px 3px; padding: 3px 8px 0 6px; border: 1px solid #666; }
.toolbox-foot svg { width: 14px; height: 14px; }
.toolbox-foot a { color: #1010c0; text-decoration: none; }

/* Spreadsheet tables */
.sheet { width: 100%; table-layout: fixed; border-spacing: 0; border-top: 1px solid var(--line); flex: none; }
.sheet th, .sheet td { height: 21px; padding: 0 0 0 7px; border: solid var(--line); border-width: 0 1px 1px 0; background: #fff; text-align: left; font-weight: 400; }
.sheet th { padding: 0 2px 0 0; background: var(--head); text-align: center; }
.sheet th:first-child { border-left-width: 1px; }
.sheet .letters th { height: 25px; padding-top: 2px; }
.sheet .heads th, .sheet .short th, .sheet .short td { height: 20px; }
.sheet .heads th:not(:first-child) { background: var(--blue); color: #0c1a33; }
.sheet .tall th, .sheet .tall td { height: 34px; }
.sheet .ro { background: var(--cell); }
.sheet .letters .picked { background: var(--gold-fade); }
.sheet .picked-row { background: var(--gold); }
.sheet .new td { color: #888; }
.sheet .cursor { outline: 2px dotted #000; outline-offset: -1px; }
.sheet .has-combo { padding: 0 0 0 6px; }
.sheet .nowrap { white-space: nowrap; }
.c-row { width: 46px; }

.combo { display: grid; grid-template-columns: 1fr 16px; align-items: center; }
.combo select { grid-area: 1 / 1 / 2 / 3; appearance: none; height: 16px; }
.combo .arrow { grid-area: 1 / 2; height: 16px; display: grid; place-items: center; background: #d8d8d4; border: 1px solid #f5f5f5; border-right-color: #555; border-bottom-color: #555; color: #000; pointer-events: none; }

.tree { display: flex; align-items: center; }
.sheet td:has(.tree) { padding: 0; }
.l1 { padding-left: 5px; gap: 10px; }
.l1.leaf { padding-left: 24px; }
.l2 { padding-left: 19px; gap: 8px; }
.l3 { padding-left: 33px; gap: 8px; }
.l4 { padding-left: 47px; gap: 8px; }

.outline { width: 514px; }
.outline th:nth-child(2), .props th:nth-child(2) { padding-left: 15px; }
.o-id { width: 184px; }
.o-name { width: 99px; }
.o-value { width: 95px; }
.o-unit { width: 90px; }

.props-wrap { padding: 1px 2px 0 2px; }
.p-name { width: 130px; }
.props td:nth-child(2) { padding-left: 38px; }
.props .group td:nth-child(2) { padding: 0; background: #808080; border-color: #808080; color: #fff; }

.grid-view { flex: 1; min-height: 0; overflow: hidden; }
.design { width: 847px; }
.d-a { width: 89px; }
.d-b { width: 102px; }
.d-c { width: 114px; }
.d-d { width: 130px; }
.d-e { width: 84px; }
.d-f { width: 134px; }
.d-g { width: 64px; }
.d-h { width: 84px; }
.design td { padding-left: 7px; }
.sheet .name { background: var(--pale); color: #0c1a33; }
.units td { text-align: center; padding: 0 2px 0 0; }
.units .has-combo { text-align: left; }
.sheet .heads th:has(.head) { padding: 0; }
.head { display: flex; align-items: center; padding: 0 4px 0 3px; }
.head span { flex: 1; white-space: nowrap; }
.filter { width: 16px; height: 16px; display: grid; place-items: center; background: #ececec; border: 1px solid #dcdcdc; border-radius: 2px; color: #000; }
.design .tick { padding: 0 2px 0 0; text-align: center; }
.val { margin-left: 8px; vertical-align: middle; }
.retain { display: flex; align-items: center; gap: 9px; padding-left: 2px; }
input[type="checkbox"] { appearance: none; width: 13px; height: 13px; border: 1px solid #8c9096; background: linear-gradient(135deg, #cfd2d6, #fff); box-shadow: inset 0 0 0 1px #f4f4f4; display: inline-grid; place-items: center; vertical-align: middle; }
input[type="checkbox"]:checked::after { content: ""; width: 4px; height: 8px; border: solid #2b3c7c; border-width: 0 2px 2px 0; transform: rotate(40deg); margin-bottom: 2px; }
input.grey:checked::after { border-color: #4a4a4a; }

.hscroll { display: flex; align-items: center; height: 17px; flex: none; border-top: 1px solid #fff; padding-left: 5px; gap: 6px; }
.hscroll svg { width: 6px; height: 8px; }
.hscroll .thumb { width: 300px; height: 15px; background: #cdcdcd; }

.design-area { position: relative; display: grid; min-height: 0; min-width: 0; }
.chart-window { position: absolute; left: 56px; right: 0; top: 346px; bottom: -5px; z-index: 1; display: flex; flex-direction: column; padding: 5px 0 5px 6px; background: #f3f3f3; border-bottom: 1px solid #444; }
.chart-window h2 { height: 21px; padding: 4px 5px; background: linear-gradient(90deg, #808080, #858585 12%, #c8c8c8); color: #fff; border-bottom: 1px solid var(--line); }
.canvas { flex: 1; background: #fff; border: solid var(--line); border-width: 0 0 1px 1px; }

/* Messages */
.log { flex: 1; min-height: 0; display: flex; }
.log-view { flex: 1; min-width: 0; overflow: hidden; }
.m-type { width: 83px; }
.m-assoc { width: 201px; }
.m-date { width: 122px; }
.log .sheet th, .log .sheet td { height: 20px; }
.log .sheet .letters th { height: 25px; }
.log .sheet .tall td { height: 34px; }
.log .sheet .split th, .log .sheet .split td { height: 2px; background: var(--head); }
.log .sheet td { background: var(--cell); white-space: nowrap; }
.log .sheet td:last-child { padding-left: 8px; }
.error td { color: #8b0f14; }
.vscroll { width: 18px; display: flex; flex-direction: column; align-items: center; gap: 23px; padding: 6px 0 4px; background: #f1f1f1; }
.vscroll svg { width: 8px; height: 6px; }
.vscroll .thumb { width: 14px; height: 17px; background: #cdcdcd; }
.vscroll .down { margin-top: auto; }

.progress { border-bottom: 0; }
.progress-cols { flex: 1; display: grid; grid-template-columns: 46px 250px minmax(0, 1fr) 391px 17px; border-top: 1px solid var(--line); }
.progress-cols span { border-right: 1px solid var(--line); background: var(--head); }
.progress-cols .gold { background: #e9dcc0; }
.progress-cols .end { border: 0; background: var(--face); }

/* Status bar */
.statusbar { display: flex; align-items: center; height: 26px; flex: none; padding: 2px 15px 0 6px; border-top: 1px solid #dcdcdc; }
.lamp { width: 10px; height: 16px; }
.ready { margin-left: 10px; flex: 1; }
.status-buttons { display: flex; gap: 3px; }
.status-buttons button { display: flex; align-items: center; gap: 3px; height: 21px; padding: 0 4px 0 2px; background: #cfe0f2; border: 1px solid #2a63a0; }
.status-buttons .plain { background: #d6d6d6; border-color: #b8b8b8; padding-right: 6px; }
.status-buttons svg { width: 16px; height: 16px; }

/* Windows taskbar */
.taskbar { display: flex; justify-content: space-between; height: 40px; flex: none; background: #161616; color: #fff; }
.apps { display: flex; }
.apps button { width: 49px; height: 40px; display: grid; place-items: center; border-bottom: 2px solid transparent; }
.apps .system { width: 48px; }
.apps .edge { margin-left: 2px; }
.apps .open { background: linear-gradient(#98a0bc, #98a0bc) center bottom / 40px 2px no-repeat border-box; }
.apps .current { background: #454545; border-bottom-color: #98a0bc; }
.t16 { width: 16px; height: 16px; }
.t22 { width: 22px; height: 22px; }
.t24 { width: 24px; height: 24px; }
.tray { display: flex; align-items: center; padding-right: 25px; }
.tray svg { fill: none; stroke: #fff; stroke-width: 1.200; }
.people { width: 16px; height: 16px; margin-right: 22px; }
.chev { width: 12px; height: 12px; margin-right: 10px; }
.net { width: 16px; height: 14px; margin-right: 8px; }
.vol { width: 14px; height: 12px; margin-right: 12px; }
.clock { display: grid; text-align: center; line-height: 18px; margin-right: 18px; }
.note { width: 16px; height: 16px; }
```
